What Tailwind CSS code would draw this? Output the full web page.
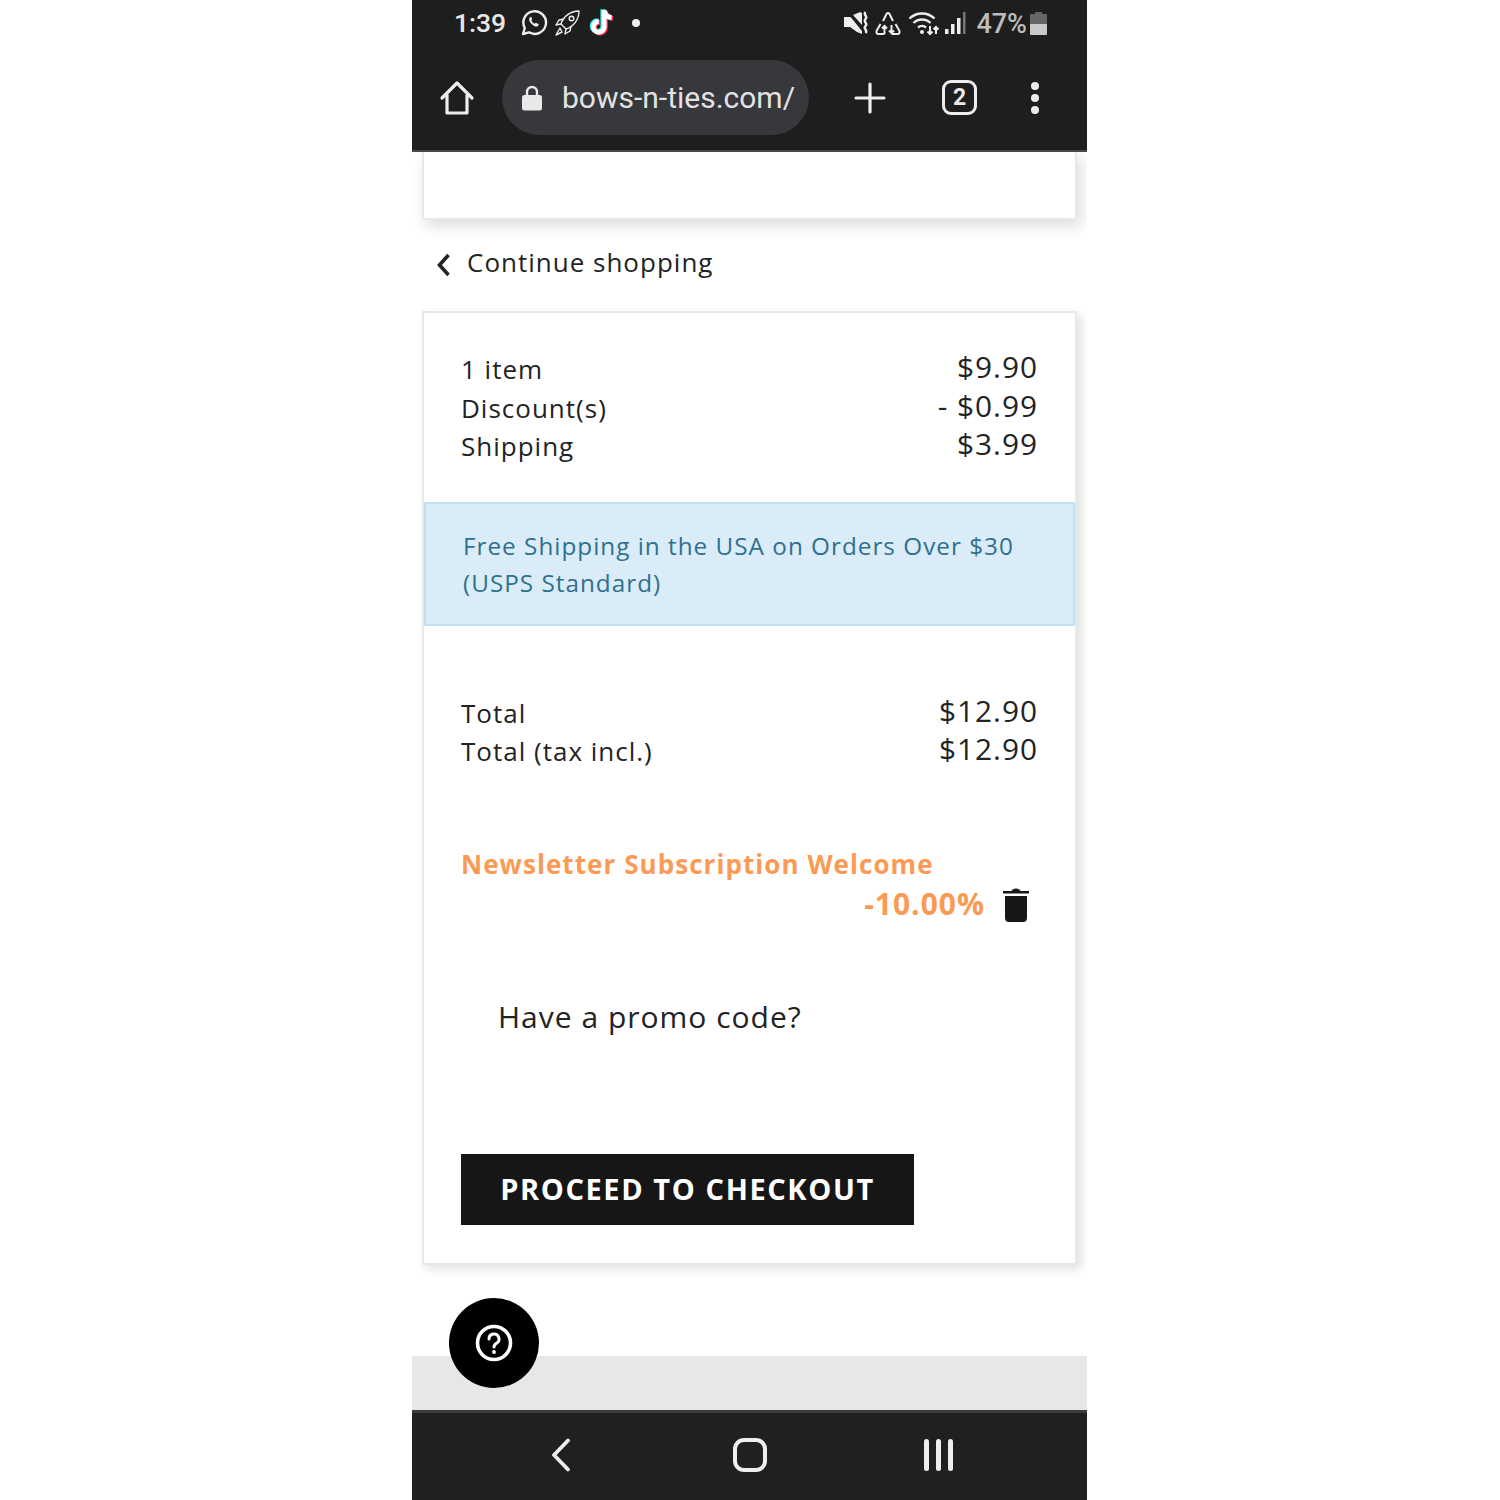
<!DOCTYPE html>
<html><head><meta charset="utf-8"><script src="https://cdn.jsdelivr.net/npm/@tailwindcss/browser@4"></script></head>
<body class="bg-white">
<div class="relative ml-[412px] flex h-[1500px] w-[675px] flex-col overflow-hidden bg-white font-['Open_Sans',sans-serif] text-[#232323]">
  <!-- browser chrome -->
  <header class="h-[152px] shrink-0 border-b-2 border-[#4a4a4a] bg-[#1e1e1e] font-['Roboto',sans-serif]">
    <div class="flex h-[46px] items-center pl-[42px] pr-[40px] text-[#e8e8e8]">
      <span class="mt-[1px] w-[66px] text-[26.500px] font-medium leading-none">1:39</span>
      <svg class="mt-[-1px] h-[28px] w-[28px]" viewBox="0 0 28 28" fill="none" stroke="#eee" stroke-width="2.400"><path d="M3 25l1.800-6A11.300 11.300 0 1 1 9 23.300z" stroke-linejoin="round"/><path d="M10 8.500c-1.300 1-1.300 3.300 1.500 6.200s5 3.500 6.500 2.300l.8-1.700-3-1.500-1 1c-1.500-.5-3-2-3.500-3.500l1-1-1.300-2.800z" fill="#eee" stroke="none"/></svg>
      <svg class="ml-[5px] h-[28px] w-[28px]" viewBox="0 0 28 28" fill="none" stroke="#eee" stroke-width="1.400" stroke-linejoin="round"><path d="M8 15C10 8 17 2 26 2c0 9-6 16-13 18z"/><circle cx="18.500" cy="9.500" r="2.300"/><path d="M8 15l-5 1 3-5 5-1M13 20l-1 5 5-3 1-5M7 19l-4 7 6-3z"/></svg>
      <svg class="ml-[7px] mt-[-2px] h-[30px] w-[28px]" viewBox="0 0 26 28" fill="none" stroke-width="4.600"><path d="M15 3v15.500a5 5 0 1 1-5-5M15 3c.5 4 3.500 6.500 7 7" stroke="#25f4ee" transform="translate(-1.200 -.8)"/><path d="M15 3v15.500a5 5 0 1 1-5-5M15 3c.5 4 3.500 6.500 7 7" stroke="#fe2c55" transform="translate(1.200 .8)"/><path d="M15 3v15.500a5 5 0 1 1-5-5M15 3c.5 4 3.500 6.500 7 7" stroke="#fff"/></svg>
      <span class="ml-[16px] h-[8px] w-[8px] rounded-full bg-[#eee]"></span>
      <div class="ml-auto flex items-center">
        <svg class="h-[24px] w-[26px]" viewBox="0 0 26 24" fill="#eee"><path d="M0 6h6l1 .5 11 13.500v3l-5-2-7-5H0zM9 4l7-3 2 1v12z"/><path d="M21.500 1c-3 3 3 4 0 7s3 4 0 7 3 4 0 7" fill="none" stroke="#eee" stroke-width="2.400"/></svg>
        <svg class="ml-[5px] h-[26px] w-[26px]" viewBox="0 0 26 26" fill="none" stroke="#eee" stroke-width="2"><path d="M8 11l3.500-7q1.500-2 3 0l3.500 7M5.500 14l-4 7q-.5 3 2 3h6M20.500 14l4 7q.5 3-2 3h-6M9.500 24v-8M7 18.500L9.500 16l2.500 2.500M16.500 15v8M14 20.500l2.500 2.500 2.500-2.500"/></svg>
        <svg class="ml-[7px] h-[26px] w-[32px]" viewBox="0 0 32 26" fill="none" stroke="#eee" stroke-width="2.400"><path d="M1.500 8.500a18 18 0 0 1 25 0M5.500 13a12 12 0 0 1 17 0M10 17.500a6 6 0 0 1 8 0"/><circle cx="14" cy="22" r="2" fill="#eee" stroke="none"/><path d="M22 16v8M19.500 21.500L22 24l2.500-2.500M28 24v-7M25.500 19.500L28 17l2.500 2.500" stroke-width="2"/></svg>
        <svg class="ml-[4px] h-[24px] w-[22px]" viewBox="0 0 22 24"><rect x="1" y="18" width="3.500" height="5" fill="#eee"/><rect x="7" y="13" width="3.500" height="10" fill="#eee"/><rect x="13" y="7" width="3.500" height="16" fill="#eee"/><rect x="19" y="1" width="2.500" height="22" fill="#777"/></svg>
        <span class="ml-[10px] mt-[2px] text-[27px] font-medium leading-none text-[#bdbdbd]">47%</span>
        <svg class="ml-[3px] h-[24px] w-[17px]" viewBox="0 0 17 24"><path d="M5 1h7v2h4a1 1 0 0 1 1 1v9H0V4a1 1 0 0 1 1-1h4z" fill="#666"/><path d="M0 13h17v10a1 1 0 0 1-1 1H1a1 1 0 0 1-1-1z" fill="#c9c9c9"/></svg>
      </div>
    </div>
    <div class="mt-[14px] flex h-[75px] items-center">
      <svg class="ml-[27px] h-[36px] w-[36px]" viewBox="0 0 36 36" fill="none" stroke="#eee" stroke-width="3.200" stroke-linejoin="round" stroke-linecap="round"><path d="M3 18L18 3l15 15M8 15v18h20V15"/></svg>
      <div class="ml-[27px] flex h-[75px] w-[307px] items-center rounded-full bg-[#36383c]">
        <svg class="ml-[20px] h-[26px] w-[20px]" viewBox="0 0 20 26"><path d="M5 11V7a5 5 0 0 1 10 0v4" fill="none" stroke="#e8e8e8" stroke-width="2.400"/><rect y="10" width="20" height="15.500" rx="2.500" fill="#e8e8e8"/></svg>
        <span class="ml-[20px] text-[30px] leading-none text-[#e3e3e3]">bows-n-ties.com/</span>
      </div>
      <svg class="ml-[45px] h-[32px] w-[32px]" viewBox="0 0 32 32" stroke="#eee" stroke-width="3.200" stroke-linecap="round"><path d="M16 2v28M2 16h28"/></svg>
      <div class="ml-[56px] flex h-[35px] w-[35px] items-center justify-center rounded-[9px] border-[3px] border-[#eee] text-[23px] font-bold leading-none text-[#e8e8e8]">2</div>
      <div class="ml-[54px] flex flex-col gap-[4px]"><span class="h-[8px] w-[8px] rounded-full bg-[#eee]"></span><span class="h-[8px] w-[8px] rounded-full bg-[#eee]"></span><span class="h-[8px] w-[8px] rounded-full bg-[#eee]"></span></div>
    </div>
  </header>

  <main class="flex-1 text-[26px] leading-[38.500px] tracking-[1px]">
    <div class="mx-[10px] h-[68px] border-x-2 border-b-2 border-[#e8e8e8] bg-white shadow-[4px_6px_14px_rgba(0,0,0,0.14)]"></div>

    <a class="mt-[22px] flex h-[40px] items-center pl-[25px] text-[#232323]">
      <svg class="mt-[5px] h-[24px] w-[13px]" viewBox="0 0 13 24" fill="none" stroke="#232323" stroke-width="3.600"><path d="M11.500 2L2.500 12l9 10"/></svg>
      <span class="ml-[17px]">Continue shopping</span>
    </a>

    <section class="mx-[10px] mt-[29px] h-[954px] border-2 border-[#e8e8e8] bg-white shadow-[4px_4px_10px_rgba(0,0,0,0.13)]">
      <div class="px-[37px] pt-[35px]">
        <div class="flex h-[38.500px] items-start justify-between"><span class="mt-[2px]">1 item</span><span class="text-[29.800px]">$9.90</span></div>
        <div class="flex h-[38.500px] items-start justify-between"><span class="mt-[2px]">Discount(s)</span><span class="text-[29.800px]">- $0.99</span></div>
        <div class="flex h-[38.500px] items-start justify-between"><span class="mt-[2px]">Shipping</span><span class="text-[29.800px]">$3.99</span></div>
      </div>

      <div class="mt-[38px] h-[124px] border-2 border-[#bfe0f0] bg-[#d9ecf7] px-[37px] pt-[23px] text-[24.300px] leading-[37.500px] text-[#31708f]">Free Shipping in the USA on Orders Over $30<br>(USPS Standard)</div>

      <div class="mt-[66px] px-[37px]">
        <div class="flex h-[38.500px] items-start justify-between"><span class="mt-[2px]">Total</span><span class="text-[29.800px]">$12.90</span></div>
        <div class="flex h-[38.500px] items-start justify-between"><span class="mt-[2px]">Total (tax incl.)</span><span class="text-[29.800px]">$12.90</span></div>
      </div>

      <div class="mt-[76px] px-[37px] text-[#fb9a54]">
        <div class="font-bold tracking-[1.060px]">Newsletter Subscription Welcome</div>
        <div class="mt-[2px] flex items-center justify-end pr-[9px] text-[30px] font-bold">
          <span>-10.00%</span>
          <svg class="ml-[18px] mt-[1px] h-[34px] w-[26px]" viewBox="0 0 26 34" fill="#171717"><path d="M0 3h8.500q1-2.500 4.500-2.500T17.500 3H26v2.500H0zM2 8h22v22q0 4-4 4H6q-4 0-4-4z"/></svg>
        </div>
      </div>

      <div class="mt-[72px] pl-[74px] text-[30px] leading-[42px]">Have a promo code?</div>

      <div class="mt-[116px] ml-[37px] flex h-[71px] w-[453px] items-center justify-center bg-[#161616] text-[29px] font-bold tracking-[1.600px] text-white">PROCEED TO CHECKOUT</div>
    </section>
  </main>

  <div class="h-[54px] shrink-0 bg-[#e7e7e7]"></div>
  <nav class="flex h-[90px] shrink-0 items-center border-t-[3px] border-[#3c3c3c] bg-[#202020] pb-[3px]">
    <svg class="ml-[139px] h-[34px] w-[20px]" viewBox="0 0 20 34" fill="none" stroke="#eee" stroke-width="3.800" stroke-linecap="round" stroke-linejoin="round"><path d="M17 2.500L3 17l14 14.500"/></svg>
    <div class="ml-[162px] h-[34px] w-[34px] rounded-[11px] border-[4px] border-[#eee]"></div>
    <div class="ml-[157px] flex gap-[7.500px]"><span class="h-[32px] w-[4.500px] rounded-full bg-[#eee]"></span><span class="h-[32px] w-[4.500px] rounded-full bg-[#eee]"></span><span class="h-[32px] w-[4.500px] rounded-full bg-[#eee]"></span></div>
  </nav>

  <button class="absolute left-[37px] top-[1298px] flex h-[90px] w-[90px] items-center justify-center rounded-full bg-black">
    <svg class="h-[38px] w-[38px]" viewBox="0 0 38 38" fill="none" stroke="#fff" stroke-width="3.600" stroke-linecap="round"><circle cx="19" cy="19" r="16.500"/><path d="M14 15a5 5 0 1 1 7.500 4.300c-1.500.9-2.500 1.700-2.500 3.700" stroke-width="3"/><circle cx="19" cy="28" r="1.300" fill="#fff" stroke-width="1.200"/></svg>
  </button>
</div>
</body></html>
